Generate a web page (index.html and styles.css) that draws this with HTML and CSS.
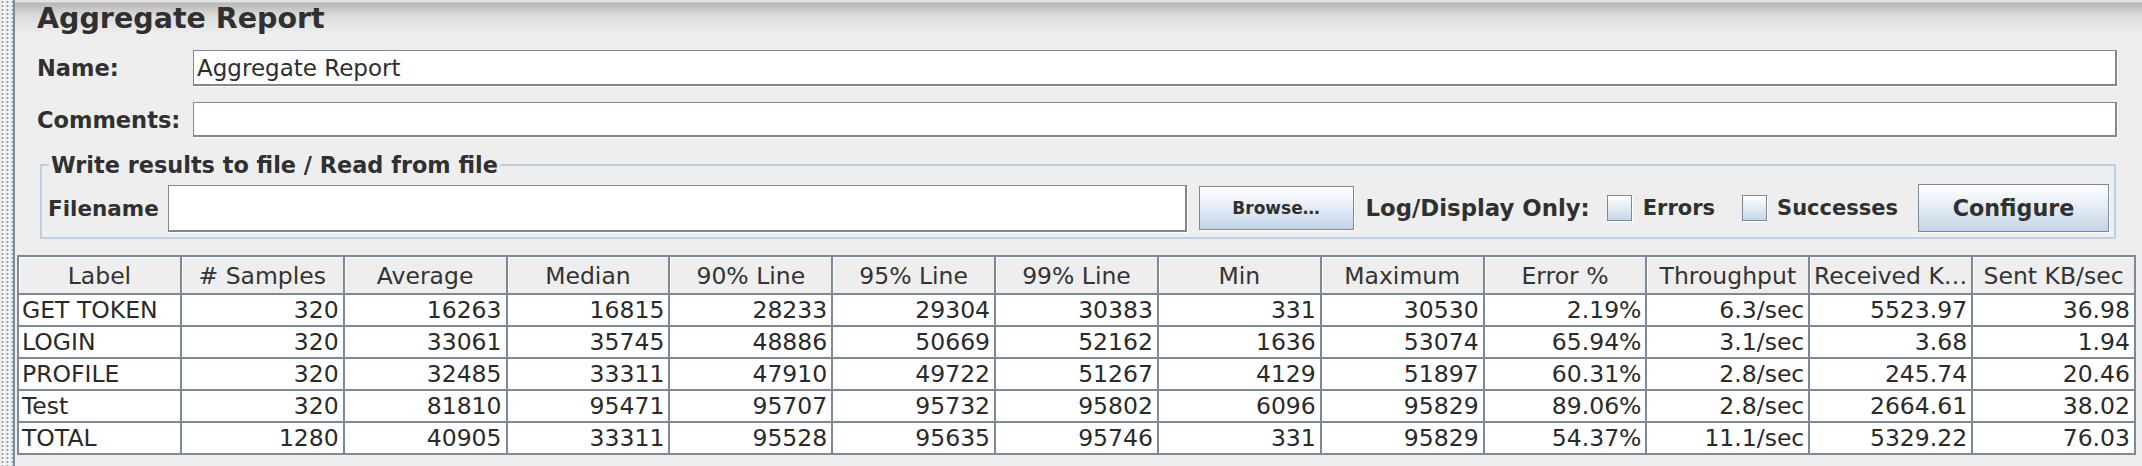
FILE: index.html
```html
<!DOCTYPE html>
<html lang="en">
<head>
<meta charset="utf-8">
<title>Aggregate Report</title>
<link rel="stylesheet" href="styles.css">
</head>
<body>
<div class="window">
  <div class="grip"></div>
  <div class="divider"></div>
  <div class="main">
    <div class="title">Aggregate Report</div>
    <div class="row row-name">
      <span class="lbl lbl-col">Name:</span>
      <div class="field name-field">Aggregate Report</div>
    </div>
    <div class="row row-comments">
      <span class="lbl lbl-col">Comments:</span>
      <div class="field comments-field"></div>
    </div>
    <fieldset class="group">
      <legend>Write results to file / Read from file</legend>
      <div class="file-row">
        <span class="lbl file-lbl">Filename</span>
        <div class="field file-field"></div>
        <button class="btn browse">Browse…</button>
        <span class="lbl log-lbl">Log/Display Only:</span>
        <span class="check errors"><span class="box"></span><span class="lbl">Errors</span></span>
        <span class="check successes"><span class="box"></span><span class="lbl">Successes</span></span>
        <button class="btn configure">Configure</button>
      </div>
    </fieldset>
    <table class="report">
      <thead>
        <tr>
          <th>Label</th><th># Samples</th><th>Average</th><th>Median</th><th>90% Line</th><th>95% Line</th><th>99% Line</th><th>Min</th><th>Maximum</th><th>Error %</th><th>Throughput</th><th>Received K…</th><th>Sent KB/sec</th>
        </tr>
      </thead>
      <tbody>
        <tr><td class="name">GET TOKEN</td><td>320</td><td>16263</td><td>16815</td><td>28233</td><td>29304</td><td>30383</td><td>331</td><td>30530</td><td>2.19%</td><td>6.3/sec</td><td>5523.97</td><td>36.98</td></tr>
        <tr><td class="name">LOGIN</td><td>320</td><td>33061</td><td>35745</td><td>48886</td><td>50669</td><td>52162</td><td>1636</td><td>53074</td><td>65.94%</td><td>3.1/sec</td><td>3.68</td><td>1.94</td></tr>
        <tr><td class="name">PROFILE</td><td>320</td><td>32485</td><td>33311</td><td>47910</td><td>49722</td><td>51267</td><td>4129</td><td>51897</td><td>60.31%</td><td>2.8/sec</td><td>245.74</td><td>20.46</td></tr>
        <tr><td class="name">Test</td><td>320</td><td>81810</td><td>95471</td><td>95707</td><td>95732</td><td>95802</td><td>6096</td><td>95829</td><td>89.06%</td><td>2.8/sec</td><td>2664.61</td><td>38.02</td></tr>
        <tr><td class="name">TOTAL</td><td>1280</td><td>40905</td><td>33311</td><td>95528</td><td>95635</td><td>95746</td><td>331</td><td>95829</td><td>54.37%</td><td>11.1/sec</td><td>5329.22</td><td>76.03</td></tr>
      </tbody>
    </table>
  </div>
</div>
</body>
</html>
```
FILE: styles.css
```css
html, body {
  margin: 0;
  padding: 0;
  background: #eeeeee;
}
body {
  font-family: "DejaVu Sans", "Liberation Sans", sans-serif;
  color: #333333;
}
.window {
  display: flex;
  height: 466px;
  overflow: hidden;
}
.grip {
  width: 13px;
  flex: none;
  background-color: #eeeeee;
  background-image:
    radial-gradient(circle, #8c9cac 0 0.9px, transparent 1.2px),
    radial-gradient(circle, #ffffff 0 0.9px, transparent 1.2px);
  background-size: 5px 4px, 5px 4px;
  background-position: 5px 0, 1px 2px;
}
.divider {
  width: 2px;
  flex: none;
  background: #7c8c9b;
}
.main {
  flex: 1;
  min-width: 0;
  padding: 0 6px 0 2px;
  background: linear-gradient(#e4e4e4 0, #e4e4e4 2px, #b6b6b6 3px, #dcdcdc 16px, #eeeeee 34px) no-repeat;
  background-size: 100% 40px;
  background-color: #eeeeee;
}
.title {
  height: 38px;
  line-height: 38px;
  font-size: 28.5px;
  font-weight: bold;
  padding-left: 20px;
  color: #303030;
  white-space: nowrap;
}
.row {
  display: flex;
  align-items: center;
  margin-left: 20px;
  margin-right: 19px;
}
.row-name {
  margin-top: 12px;
}
.row-comments {
  margin-top: 16px;
}
.lbl {
  font-weight: bold;
  font-size: 22.5px;
  color: #303030;
  white-space: nowrap;
}
.lbl-col {
  width: 156px;
  flex: none;
}
.field {
  flex: 1;
  min-width: 0;
  box-sizing: border-box;
  background: #ffffff;
  border: 1px solid #7b8a99;
  border-right-width: 2px;
  border-bottom-width: 2px;
  box-shadow: 1px 1px 0 #ffffff;
  font-size: 23px;
  color: #2e2e2e;
  padding-left: 3px;
  display: flex;
  align-items: center;
  white-space: nowrap;
}
.name-field {
  height: 36px;
}
.comments-field {
  height: 35px;
}
.group {
  margin: 15px 20px 0 23px;
  padding: 0 5px 5px 6px;
  border: 2px solid #bcd1e6;
  min-width: 0;
}
.group legend {
  font-weight: bold;
  font-size: 22.4px;
  line-height: 26px;
  padding: 0 2px;
  margin-left: 1px;
  color: #303030;
  white-space: nowrap;
}
.file-row {
  display: flex;
  align-items: center;
  padding-top: 6px;
}
.file-lbl {
  font-size: 21.5px;
}
.file-field {
  height: 47px;
  margin-left: 9px;
}
.btn {
  box-sizing: border-box;
  flex: none;
  border: 1px solid #7b8a99;
  background: linear-gradient(#ffffff, #e6eef7 45%, #c2d4e7);
  box-shadow: 1px 1px 0 #ffffff;
  font-family: "DejaVu Sans", "Liberation Sans", sans-serif;
  font-weight: bold;
  color: #303030;
  padding: 0;
  border-radius: 0;
}
.browse {
  width: 155px;
  height: 44px;
  font-size: 17px;
  margin-left: 12px;
}
.log-lbl {
  margin-left: 12px;
  font-size: 22.8px;
}
.check {
  display: flex;
  align-items: center;
  flex: none;
}
.check .lbl {
  font-size: 21px;
}
.errors {
  margin-left: 17px;
}
.successes {
  margin-left: 27px;
}
.box {
  box-sizing: border-box;
  width: 25px;
  height: 26px;
  border: 1px solid #7b8a99;
  background: linear-gradient(#ffffff, #e3ecf5 50%, #c6d6e8);
  box-shadow: 1px 1px 0 #ffffff;
  margin-right: 11px;
}
.successes .box {
  margin-right: 10px;
}
.configure {
  width: 191px;
  height: 48px;
  font-size: 22.2px;
  margin-left: 20px;
}
.report {
  margin-top: 16px;
  width: 100%;
  table-layout: fixed;
  border-collapse: collapse;
  background: #ffffff;
  font-size: 23.5px;
  color: #2a2a2a;
}
.report th {
  background: #eeeeee;
  font-weight: normal;
  line-height: 33px;
  padding: 3px 0 0 0;
  border: 2px solid #7b8a99;
  box-shadow: inset 1px 1px 0 #ffffff;
  white-space: nowrap;
  overflow: hidden;
  color: #333333;
}
.report td {
  border: 2px solid #7b8a99;
  line-height: 30px;
  padding: 0 4px 0 3px;
  text-align: right;
  white-space: nowrap;
  overflow: hidden;
}
.report td.name {
  text-align: left;
}
```
